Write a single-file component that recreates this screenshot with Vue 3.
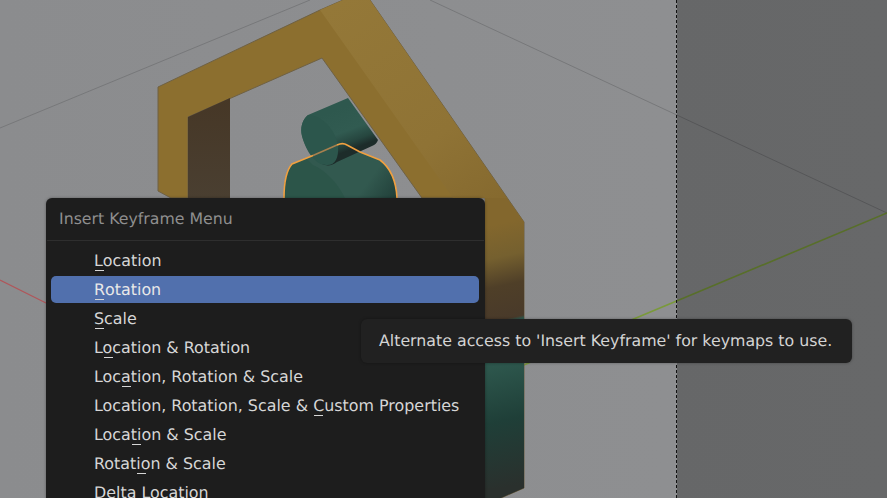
<script setup>
const items = [
  { text: 'Location', key: 0 },
  { text: 'Rotation', key: 0, active: true },
  { text: 'Scale', key: 0 },
  { text: 'Location & Rotation', key: 1 },
  { text: 'Location, Rotation & Scale', key: 3 },
  { text: 'Location, Rotation, Scale & Custom Properties', key: 28 },
  { text: 'Location & Scale', key: 4 },
  { text: 'Rotation & Scale', key: 5 },
  { text: 'Delta Location', key: -1 }
]
</script>

<template>
  <div class="viewport">
    <svg class="scene" width="887" height="498" viewBox="0 0 887 498">
      <defs>
        <linearGradient id="bg" x1="0" y1="0" x2="1" y2="0">
          <stop offset="0" stop-color="#8b8c8e" />
          <stop offset="1" stop-color="#8f9092" />
        </linearGradient>
        <linearGradient id="side" gradientUnits="userSpaceOnUse" x1="505" y1="198" x2="569" y2="488">
          <stop offset="0.08" stop-color="#83672d" />
          <stop offset="0.19" stop-color="#75602f" />
          <stop offset="0.286" stop-color="#4f3f28" />
          <stop offset="0.398" stop-color="#493a2a" />
          <stop offset="0.408" stop-color="#2f5a50" />
          <stop offset="0.55" stop-color="#2d564c" />
          <stop offset="0.73" stop-color="#1f3f38" />
          <stop offset="0.953" stop-color="#2a302d" />
        </linearGradient>
        <linearGradient id="face" gradientUnits="userSpaceOnUse" x1="340" y1="0" x2="500" y2="230">
          <stop offset="0" stop-color="#947838" />
          <stop offset="0.6" stop-color="#8f7335" />
          <stop offset="1" stop-color="#83672d" />
        </linearGradient>
        <linearGradient id="inner" x1="0" y1="0" x2="0" y2="1">
          <stop offset="0" stop-color="#463726" />
          <stop offset="1" stop-color="#4a3f31" />
        </linearGradient>
        <linearGradient id="tube" gradientUnits="userSpaceOnUse" x1="343" y1="107" x2="358" y2="147">
          <stop offset="0" stop-color="#2e584e" />
          <stop offset="0.55" stop-color="#315b51" />
          <stop offset="0.82" stop-color="#26463f" />
          <stop offset="1" stop-color="#1d2c2a" />
        </linearGradient>
        <linearGradient id="body" gradientUnits="userSpaceOnUse" x1="350" y1="160" x2="400" y2="195">
          <stop offset="0.45" stop-color="#32594f" />
          <stop offset="1" stop-color="#203e38" />
        </linearGradient>
      </defs>

      <rect width="887" height="498" fill="url(#bg)" />

      <!-- axes and grid -->
      <line x1="0" y1="128" x2="310" y2="0" stroke="#77787a" />
      <line x1="430" y1="0" x2="887" y2="213" stroke="#77787a" />
      <line x1="0" y1="280" x2="46" y2="303" stroke="#b0565a" stroke-width="1.2" />
      <line x1="500" y1="375" x2="887" y2="213" stroke="#7a9a3a" stroke-width="1.6" />

      <!-- house frame -->
      <polygon points="158,87 320,10 343,0 370,0 524,222 524,488 501,498 485,498 485,198 422,198 322,58 188,117 188,198 171,198 158,191" fill="#8c6f2f" stroke="#6f6144" stroke-width="1" />
      <polygon points="320,10 343,0 370,0 507,198 453,198" fill="url(#face)" />
      <polygon points="453,198 507,198 524,222 524,488 485,488 485,198" fill="url(#side)" />
      <polygon points="485,488 524,488 501,498 485,498" fill="#2a302d" />
      <polygon points="188,117 230,98 230,198 188,198" fill="url(#inner)" />

      <!-- selected body -->
      <path d="M284,198 C284,186 285,172 292,164 L337,145 C341,143 344,143 347,145 L360,152 L380,160 C388,166 396,178 397,198 Z" fill="url(#body)" />
      <path d="M313,165 C325,170 337,182 345,198 L284,198 C284,186 285,172 292,164 L306,158 Z" fill="#2c5549" />

      <!-- back cylinder -->
      <path d="M308,115 L348,98 L378,140 C377,143 375,145 372,146 L337,162 C333,165 329,166 325,165 C316,163 306,150 302,136 C300,128 302,120 308,115 Z" fill="url(#tube)" />
      <path d="M308,115 C302,120 300,128 302,136 C306,152 316,165 326,165 C335,166 339,158 338,146 C336,130 322,115 308,115 Z" fill="#2c564c" />

      <!-- selection outline -->
      <path d="M284,198 C284,186 285,172 292,164 L313,155.5" fill="none" stroke="#f0a040" stroke-width="1.6" />
      <path d="M313,155.5 L337,145" fill="none" stroke="#a8804e" stroke-width="1.6" />
      <path d="M337,145 C341,143 344,143 347,145 L360,152 L380,160 C388,166 396,178 397,198" fill="none" stroke="#f0a040" stroke-width="1.6" />

      <!-- area to the right of the split -->
      <rect x="677" y="0" width="210" height="498" fill="#000" fill-opacity="0.28" />
      <line x1="676.5" y1="0" x2="676.5" y2="498" stroke="#111" stroke-dasharray="3 2" />
    </svg>

    <div class="menu">
      <div class="menu-title">Insert Keyframe Menu</div>
      <div class="menu-list">
        <div
          v-for="item in items"
          :key="item.text"
          class="menu-row"
          :class="{ active: item.active }"
        >
          <template v-if="item.key >= 0">{{ item.text.slice(0, item.key) }}<span class="accel">{{ item.text[item.key] }}</span>{{ item.text.slice(item.key + 1) }}</template>
          <template v-else>{{ item.text }}</template>
        </div>
      </div>
    </div>

    <div class="tooltip">Alternate access to 'Insert Keyframe' for keymaps to use.</div>
  </div>
</template>

<style scoped>
.viewport {
  position: relative;
  width: 887px;
  height: 498px;
  overflow: hidden;
  font-family: "DejaVu Sans", sans-serif;
  font-size: 15.9px;
  text-rendering: geometricPrecision;
}

.scene {
  position: absolute;
  left: 0;
  top: 0;
  display: block;
}

.menu {
  position: absolute;
  left: 46px;
  top: 198px;
  width: 439px;
  display: flex;
  flex-direction: column;
  background: #1d1d1d;
  border-radius: 6px 6px 0 0;
  box-shadow: 0 0 3px rgb(0 0 0 / 0.35);
}

.menu-title {
  height: 43px;
  line-height: 41px;
  padding-left: 12px;
  font-size: 15.75px;
  color: #8f8f8f;
  border-bottom: 1px solid #2e2e2e;
  box-sizing: border-box;
  margin: 0 1px;
}

.menu-list {
  display: flex;
  flex-direction: column;
  gap: 2px;
  padding: 6px 6px 0 5px;
}

.menu-row {
  height: 27px;
  line-height: 27px;
  padding-left: 43px;
  border-radius: 5px;
  color: #d6d6d6;
  white-space: pre;
}

.menu-row.active {
  background: #5170ad;
  color: #e8e8e8;
}

.accel {
  position: relative;
}

.accel::after {
  content: '';
  position: absolute;
  left: 1px;
  bottom: -1px;
  width: 9px;
  height: 1px;
  background: #d6d6d6;
}

.tooltip {
  position: absolute;
  left: 361px;
  top: 319px;
  width: 491px;
  height: 44px;
  line-height: 44px;
  padding-left: 18px;
  box-sizing: border-box;
  font-size: 15.8px;
  background: #212121;
  color: #d4d4d4;
  border-radius: 6px;
  box-shadow: 0 0 3px rgb(0 0 0 / 0.35);
}
</style>
